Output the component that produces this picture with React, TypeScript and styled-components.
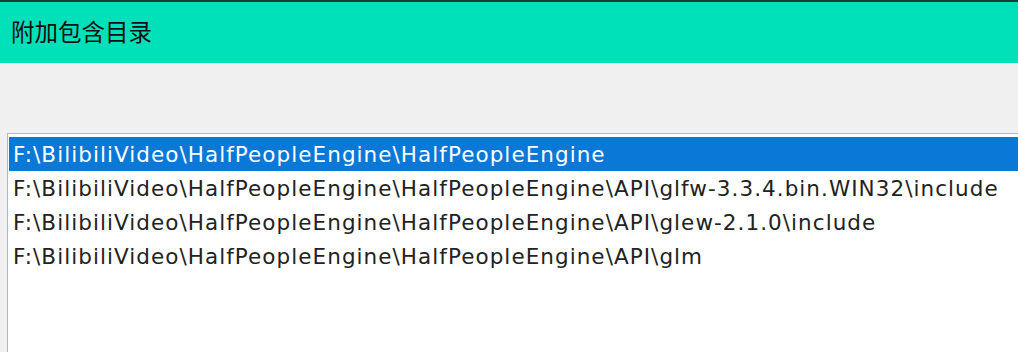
import { createGlobalStyle } from 'styled-components';
import styled from 'styled-components';

const GlobalStyle = createGlobalStyle`
  html, body {
    margin: 0;
    padding: 0;
    background: #f0f0f0;
  }
  body {
    font-family: "Noto Sans", "Noto Sans CJK SC", sans-serif;
  }
`;

const Window = styled.div`
  width: 1018px;
  height: 352px;
  overflow: hidden;
  display: flex;
  flex-direction: column;
  background: #f0f0f0;
  border-top: 2px solid #1c3d35;
`;

const TitleBar = styled.div`
  height: 61px;
  flex-shrink: 0;
  display: flex;
  align-items: center;
  padding: 0 0 3px 11px;
  box-sizing: border-box;
  background: #00e0b9;
  color: #111;
  font-family: "Noto Sans CJK SC", sans-serif;
  font-size: 23.5px;
`;

const Body = styled.div`
  flex: 1;
  display: flex;
  flex-direction: column;
  padding: 70px 0 0 7px;
`;

const ListBox = styled.ul`
  flex: 1;
  margin: 0;
  padding: 3px 0 0 1px;
  list-style: none;
  background: #fff;
  border-top: 1px solid #a9b7c6;
  border-left: 1px solid #a9b7c6;
`;

const Row = styled.li<{ $selected?: boolean }>`
  height: 34px;
  display: flex;
  align-items: center;
  padding-left: 4px;
  font-family: "DejaVu Sans", sans-serif;
  font-size: 21.5px;
  letter-spacing: 1.05px;
  white-space: nowrap;
  color: ${(p) => (p.$selected ? '#fff' : '#222')};
  background: ${(p) => (p.$selected ? '#0a78d7' : 'transparent')};
`;

const paths = [
  'F:\\BilibiliVideo\\HalfPeopleEngine\\HalfPeopleEngine',
  'F:\\BilibiliVideo\\HalfPeopleEngine\\HalfPeopleEngine\\API\\glfw-3.3.4.bin.WIN32\\include',
  'F:\\BilibiliVideo\\HalfPeopleEngine\\HalfPeopleEngine\\API\\glew-2.1.0\\include',
  'F:\\BilibiliVideo\\HalfPeopleEngine\\HalfPeopleEngine\\API\\glm',
];

export default function App() {
  return (
    <>
      <GlobalStyle />
      <Window>
        <TitleBar>附加包含目录</TitleBar>
        <Body>
          <ListBox>
            {paths.map((p, i) => (
              <Row key={p} $selected={i === 0}>
                {p}
              </Row>
            ))}
          </ListBox>
        </Body>
      </Window>
    </>
  );
}
